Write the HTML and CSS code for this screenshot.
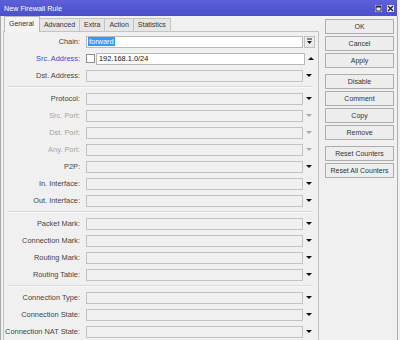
FILE: index.html
```html
<!DOCTYPE html>
<html lang="en">
<head>
  <meta charset="UTF-8">
  <title>New Firewall Rule</title>
  <link rel="stylesheet" href="styles.css">
</head>
<body>
  <div class="window">
    <div class="titlebar">
      <span class="title">New Firewall Rule</span>
      <span class="tb-btn">
        <svg width="7" height="7" viewBox="0 0 7 7"><rect x="1" y="1" width="5" height="5" fill="none" stroke="#222" stroke-width="1"/><rect x="1" y="1" width="5" height="1.5" fill="#222"/></svg>
      </span>
      <span class="tb-btn">
        <svg width="7" height="7" viewBox="0 0 7 7"><path d="M1 1 L6 6 M6 1 L1 6" stroke="#222" stroke-width="1.4"/></svg>
      </span>
    </div>

    <div class="main">
      <div class="left">
        <div class="tabs">
          <div class="tab active">General</div>
          <div class="tab">Advanced</div>
          <div class="tab">Extra</div>
          <div class="tab">Action</div>
          <div class="tab">Statistics</div>
        </div>

        <div class="panel">
          <div class="row">
            <label>Chain:</label>
            <div class="field white"><span class="sel">forward</span></div>
            <span class="drop-btn">
              <svg width="7" height="7" viewBox="0 0 7 7"><rect x="1" y="0.5" width="5" height="1" fill="#222"/><path d="M1 3 L6 3 L3.5 6 Z" fill="#222"/></svg>
            </span>
          </div>
          <div class="row">
            <label class="blue">Src. Address:</label>
            <span class="check"></span>
            <div class="field white narrow">192.168.1.0/24</div>
            <span class="arrow up"></span>
          </div>
          <div class="row">
            <label>Dst. Address:</label>
            <div class="field"></div>
            <span class="arrow"></span>
          </div>

          <div class="sep"></div>

          <div class="row">
            <label>Protocol:</label>
            <div class="field"></div>
            <span class="arrow"></span>
          </div>
          <div class="row">
            <label class="off">Src. Port:</label>
            <div class="field"></div>
            <span class="arrow off"></span>
          </div>
          <div class="row">
            <label class="off">Dst. Port:</label>
            <div class="field"></div>
            <span class="arrow off"></span>
          </div>
          <div class="row">
            <label class="off">Any. Port:</label>
            <div class="field"></div>
            <span class="arrow off"></span>
          </div>
          <div class="row">
            <label>P2P:</label>
            <div class="field"></div>
            <span class="arrow"></span>
          </div>
          <div class="row">
            <label>In. Interface:</label>
            <div class="field"></div>
            <span class="arrow"></span>
          </div>
          <div class="row">
            <label>Out. Interface:</label>
            <div class="field"></div>
            <span class="arrow"></span>
          </div>

          <div class="sep"></div>

          <div class="row">
            <label>Packet Mark:</label>
            <div class="field"></div>
            <span class="arrow"></span>
          </div>
          <div class="row">
            <label>Connection Mark:</label>
            <div class="field"></div>
            <span class="arrow"></span>
          </div>
          <div class="row">
            <label>Routing Mark:</label>
            <div class="field"></div>
            <span class="arrow"></span>
          </div>
          <div class="row">
            <label>Routing Table:</label>
            <div class="field"></div>
            <span class="arrow"></span>
          </div>

          <div class="sep"></div>

          <div class="row">
            <label>Connection Type:</label>
            <div class="field"></div>
            <span class="arrow"></span>
          </div>
          <div class="row">
            <label>Connection State:</label>
            <div class="field"></div>
            <span class="arrow"></span>
          </div>
          <div class="row">
            <label>Connection NAT State:</label>
            <div class="field"></div>
            <span class="arrow"></span>
          </div>
        </div>
      </div>

      <div class="buttons">
        <div class="btn">OK</div>
        <div class="btn">Cancel</div>
        <div class="btn">Apply</div>
        <div class="btn gap">Disable</div>
        <div class="btn">Comment</div>
        <div class="btn">Copy</div>
        <div class="btn">Remove</div>
        <div class="btn gap">Reset Counters</div>
        <div class="btn">Reset All Counters</div>
      </div>
    </div>
  </div>
</body>
</html>
```

FILE: styles.css
```css
body {
  margin: 0;
  font-family: "Liberation Sans", Arial, sans-serif;
  background: #f0f0f0;
}
.window {
  width: 400px;
  height: 340px;
  background: #f0f0f0;
  overflow: hidden;
}
.titlebar {
  height: 16px;
  margin-right: 3px;
  background: linear-gradient(#5c61d8, #4a4fcb);
  display: flex;
  align-items: center;
  padding: 0 3px 0 4px;
  gap: 5px;
}
.title {
  flex: 1;
  color: #fff;
  font-size: 7.2px;
}
.tb-btn {
  width: 7px;
  height: 7px;
  background: #e8e8e8;
  display: flex;
}
.main {
  display: flex;
  height: 324px;
  border-left: 1px solid #a8a8a8;
}
.left {
  width: 318px;
  display: flex;
  flex-direction: column;
}
.tabs {
  height: 17px;
  display: flex;
  align-items: flex-end;
  padding-left: 3px;
}
.tab {
  height: 12px;
  line-height: 12px;
  padding: 0 4px;
  font-size: 7px;
  color: #333;
  background: #e6e6e6;
  border: 1px solid #c4c4c4;
  border-bottom: none;
  margin-right: -1px;
}
.tab.active {
  height: 15px;
  line-height: 14px;
  background: #f4f4f4;
  border-color: #b9b9b9;
  padding: 0 5px 0 4px;
  position: relative;
  z-index: 1;
  margin-bottom: -1px;
}
.panel {
  flex: 1;
  margin-left: 2px;
  padding-top: 1px;
  border-left: 1px solid #c4c4c4;
  border-right: 1px solid #c4c4c4;
  border-top: 1px solid #c4c4c4;
}
.row {
  height: 17px;
  display: flex;
  align-items: center;
}
.row label {
  width: 76px;
  margin-right: 6px;
  text-align: right;
  font-size: 7.4px;
  color: #444;
}
.row label.blue { color: #4545d6; }
.row label.off { color: #a4a4a4; }
.field {
  width: 214px;
  height: 10px;
  border: 1px solid #c3c3c3;
  background: #f0f0f0;
  font-size: 7.4px;
  line-height: 10px;
  color: #111;
  padding-left: 1px;
  box-sizing: content-box;
}
.field.white {
  background: #fff;
  border-color: #b8b8b8;
}
.field.narrow {
  width: 205px;
  padding-left: 2px;
}
.sel {
  background: #3399ff;
  color: #fff;
  padding: 0 1px;
}
.check {
  width: 7px;
  height: 7px;
  border: 1px solid #8f8f8f;
  background: #fff;
  margin-right: 1px;
}
.drop-btn {
  width: 9px;
  height: 10px;
  margin-left: 1px;
  border: 1px solid #c0c0c0;
  background: #ececec;
  display: flex;
  align-items: center;
  justify-content: center;
}
.arrow {
  width: 11px;
  display: flex;
  justify-content: center;
}
.arrow::before {
  content: "";
  border-left: 3px solid transparent;
  border-right: 3px solid transparent;
  border-top: 3px solid #111;
}
.arrow.off::before { border-top-color: #a8a8a8; }
.arrow.up::before {
  border-top: none;
  border-bottom: 3px solid #111;
}
.sep {
  height: 6px;
  padding-top: 2px;
  box-sizing: border-box;
  margin: 0 5px 0 4px;
}
.sep::before {
  content: "";
  display: block;
  border-top: 1px solid #dadada;
  border-bottom: 1px solid #fafafa;
}
.buttons {
  width: 69px;
  padding: 3px 0 0 6px;
  display: flex;
  flex-direction: column;
  gap: 2px;
}
.btn {
  height: 13px;
  line-height: 13px;
  border: 1px solid #adadad;
  background: #ededed;
  text-align: center;
  font-size: 7px;
  color: #333;
}
.btn.gap { margin-top: 4px; }
.main::after {
  content: "";
  width: 1px;
  margin-left: 3px;
  background: #b0b0b0;
}
```
